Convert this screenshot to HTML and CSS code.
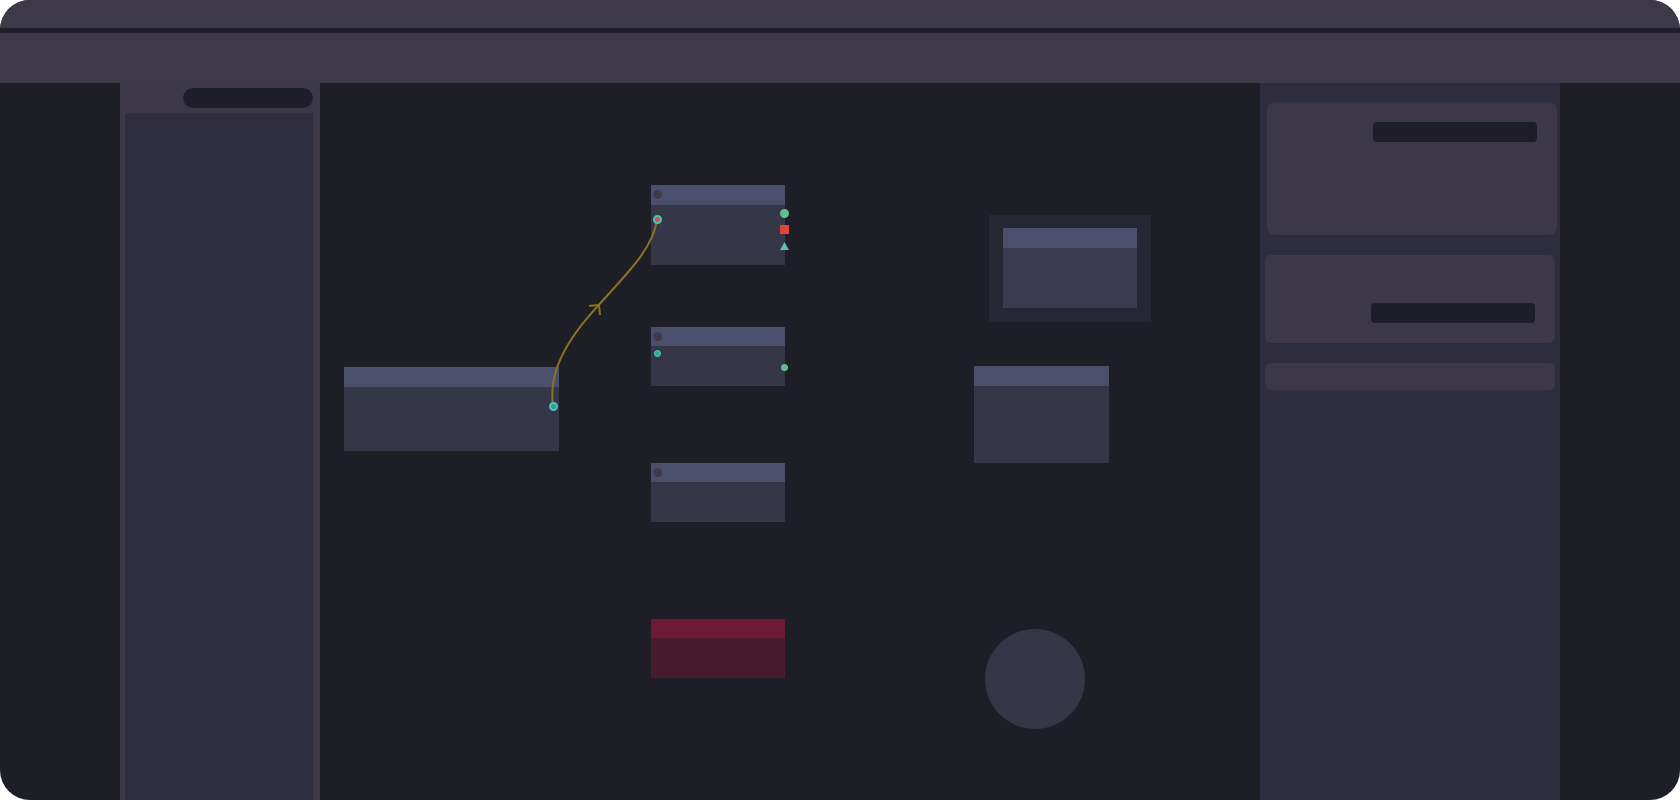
FILE: index.html
```html
<!DOCTYPE html>
<html>
<head>
    <title>Node Editor</title>
    <link rel="stylesheet" href="styles.css">
</head>
<body>
    <div class="app">
        <div class="title-bar"></div>
        <div class="divider"></div>
        <div class="toolbar"></div>

        <div class="main">
            <!-- Left sidebar -->
            <div class="sidebar">
                <div class="search-pill"></div>
                <div class="sidebar-list"></div>
            </div>

            <!-- Graph canvas -->
            <div class="canvas">
                <svg class="wires" width="940" height="717" viewBox="0 0 940 717">
                    <path d="M233 323 C222 245, 331 194, 337 136" fill="none" stroke="#8a7322" stroke-width="2"/>
                    <polyline points="269,223 279,222 280,232" fill="none" stroke="#8a7322" stroke-width="2" stroke-linejoin="round"/>
                </svg>

                <div class="node node-a">
                    <div class="node-header"></div>
                    <div class="node-body"></div>
                    <span class="port port-ring port-a"></span>
                </div>

                <div class="node node-b">
                    <div class="node-header"><span class="header-dot"></span></div>
                    <div class="node-body"></div>
                    <span class="port port-ring port-in-red"></span>
                    <span class="port port-out-circle"></span>
                    <span class="port port-out-square"></span>
                    <svg class="port port-out-tri" width="9" height="8" viewBox="0 0 9 8">
                        <polygon points="4.5,0 9,8 0,8" fill="#5bbfb0"/>
                    </svg>
                </div>

                <div class="node node-c">
                    <div class="node-header"><span class="header-dot"></span></div>
                    <div class="node-body"></div>
                    <span class="port port-small-in"></span>
                    <span class="port port-small-out"></span>
                </div>

                <div class="node node-d">
                    <div class="node-header"><span class="header-dot"></span></div>
                    <div class="node-body"></div>
                </div>

                <div class="node node-e error">
                    <div class="node-header"></div>
                    <div class="node-body"></div>
                </div>

                <div class="group-frame">
                    <div class="node node-inner">
                        <div class="node-header"></div>
                        <div class="node-body"></div>
                    </div>
                </div>

                <div class="node node-f">
                    <div class="node-header"></div>
                    <div class="node-body"></div>
                </div>

                <div class="reroute"></div>
            </div>

            <!-- Right properties panel -->
            <div class="props">
                <div class="card card-top">
                    <div class="field"></div>
                </div>
                <div class="card card-mid">
                    <div class="field"></div>
                </div>
                <div class="card card-low"></div>
            </div>
        </div>
    </div>
</body>
</html>
```

FILE: styles.css
```css
:root {
    --canvas-bg: #1e1e27;
    --bar-bg: #3e3949;
    --panel-bg: #2f2e40;
    --card-bg: #3d3848;
    --field-bg: #1e1e28;
    --node-header: #4b4f6b;
    --node-body: #353749;
}

body {
    margin: 0;
    background: #ffffff;
    font-family: 'Inter', 'Liberation Sans', sans-serif;
}

.app {
    width: 1680px;
    height: 800px;
    border-radius: 30px;
    overflow: hidden;
    display: flex;
    flex-direction: column;
    background: var(--canvas-bg);
}

.title-bar {
    height: 28px;
    background: var(--bar-bg);
}

.divider {
    height: 5px;
    background: #1f1e28;
}

.toolbar {
    height: 50px;
    background: var(--bar-bg);
}

.main {
    flex: 1;
    display: flex;
    padding: 0 120px;
    min-height: 0;
}

/* Sidebar */
.sidebar {
    width: 200px;
    box-sizing: border-box;
    padding: 5px 7px 0 5px;
    background: var(--card-bg);
    display: flex;
    flex-direction: column;
    gap: 5px;
}

.search-pill {
    align-self: flex-end;
    width: 130px;
    height: 20px;
    border-radius: 10px;
    background: var(--field-bg);
}

.sidebar-list {
    flex: 1;
    background: var(--panel-bg);
}

/* Canvas */
.canvas {
    flex: 1;
    position: relative;
}

.wires {
    position: absolute;
    left: 0;
    top: 0;
    z-index: 2;
    pointer-events: none;
}

.node {
    position: absolute;
    display: flex;
    flex-direction: column;
}

.node-header {
    height: 20px;
    background: var(--node-header);
    position: relative;
}

.node-body {
    flex: 1;
    background: var(--node-body);
}

.header-dot {
    position: absolute;
    left: 2px;
    top: 5px;
    width: 9px;
    height: 9px;
    border-radius: 50%;
    background: #3e3a4b;
}

.node-a { left: 24px; top: 284px; width: 215px; height: 84px; }
.node-b { left: 331px; top: 102px; width: 134px; height: 80px; }
.node-c { left: 331px; top: 244px; width: 134px; height: 59px; }
.node-d { left: 331px; top: 380px; width: 134px; height: 59px; }
.node-e { left: 331px; top: 536px; width: 134px; height: 59px; }
.node-f { left: 654px; top: 283px; width: 135px; height: 97px; }

.node-c .node-header,
.node-d .node-header,
.node-e .node-header {
    height: 19px;
}

.error .node-header { background: #6e1a35; }
.error .node-body { background: #481c2d; }

.group-frame {
    position: absolute;
    left: 669px;
    top: 132px;
    width: 162px;
    height: 107px;
    background: #262735;
}

.node-inner {
    left: 14px;
    top: 13px;
    width: 134px;
    height: 80px;
}

.node-inner .node-body { background: #3a3b50; }

.reroute {
    position: absolute;
    left: 665px;
    top: 546px;
    width: 100px;
    height: 100px;
    border-radius: 50%;
    background: var(--node-body);
}

/* Ports */
.port {
    position: absolute;
    display: block;
    box-sizing: border-box;
    z-index: 3;
}

.port-ring {
    width: 9px;
    height: 9px;
    border-radius: 50%;
    border: 2px solid #4fc4b6;
    background: #2f9e98;
}

.port-a { left: 205px; top: 35px; }

.port-in-red {
    left: 2px;
    top: 30px;
    background: #d9533f;
}

.port-out-circle {
    right: -4px;
    top: 24px;
    width: 9px;
    height: 9px;
    border-radius: 50%;
    background: #5fbf90;
}

.port-out-square {
    right: -4px;
    top: 40px;
    width: 9px;
    height: 9px;
    background: #e0443a;
}

.port-out-tri {
    right: -4px;
    top: 57px;
}

.port-small-in {
    left: 3px;
    top: 23px;
    width: 7px;
    height: 7px;
    border-radius: 50%;
    border: 1px solid #5fd0c0;
    background: #2fa8a0;
}

.port-small-out {
    right: -3px;
    top: 37px;
    width: 7px;
    height: 7px;
    border-radius: 50%;
    background: #5fbf90;
}

/* Properties panel */
.props {
    width: 300px;
    box-sizing: border-box;
    padding: 19px 3px 0 5px;
    background: #2e2d40;
    display: flex;
    flex-direction: column;
    gap: 20px;
}

.card {
    background: var(--card-bg);
    border-radius: 8px;
    box-sizing: border-box;
    display: flex;
    flex-direction: column;
    align-items: flex-end;
    padding: 20px;
}

.card-top {
    height: 133px;
    margin-left: 2px;
}

.card-mid {
    height: 88px;
    margin-right: 2px;
    justify-content: flex-end;
    border-radius: 6px;
}

.card-low {
    height: 27px;
    margin-right: 2px;
    padding: 0;
    border-radius: 6px;
}

.field {
    width: 164px;
    height: 20px;
    border-radius: 4px;
    background: var(--field-bg);
}
```
